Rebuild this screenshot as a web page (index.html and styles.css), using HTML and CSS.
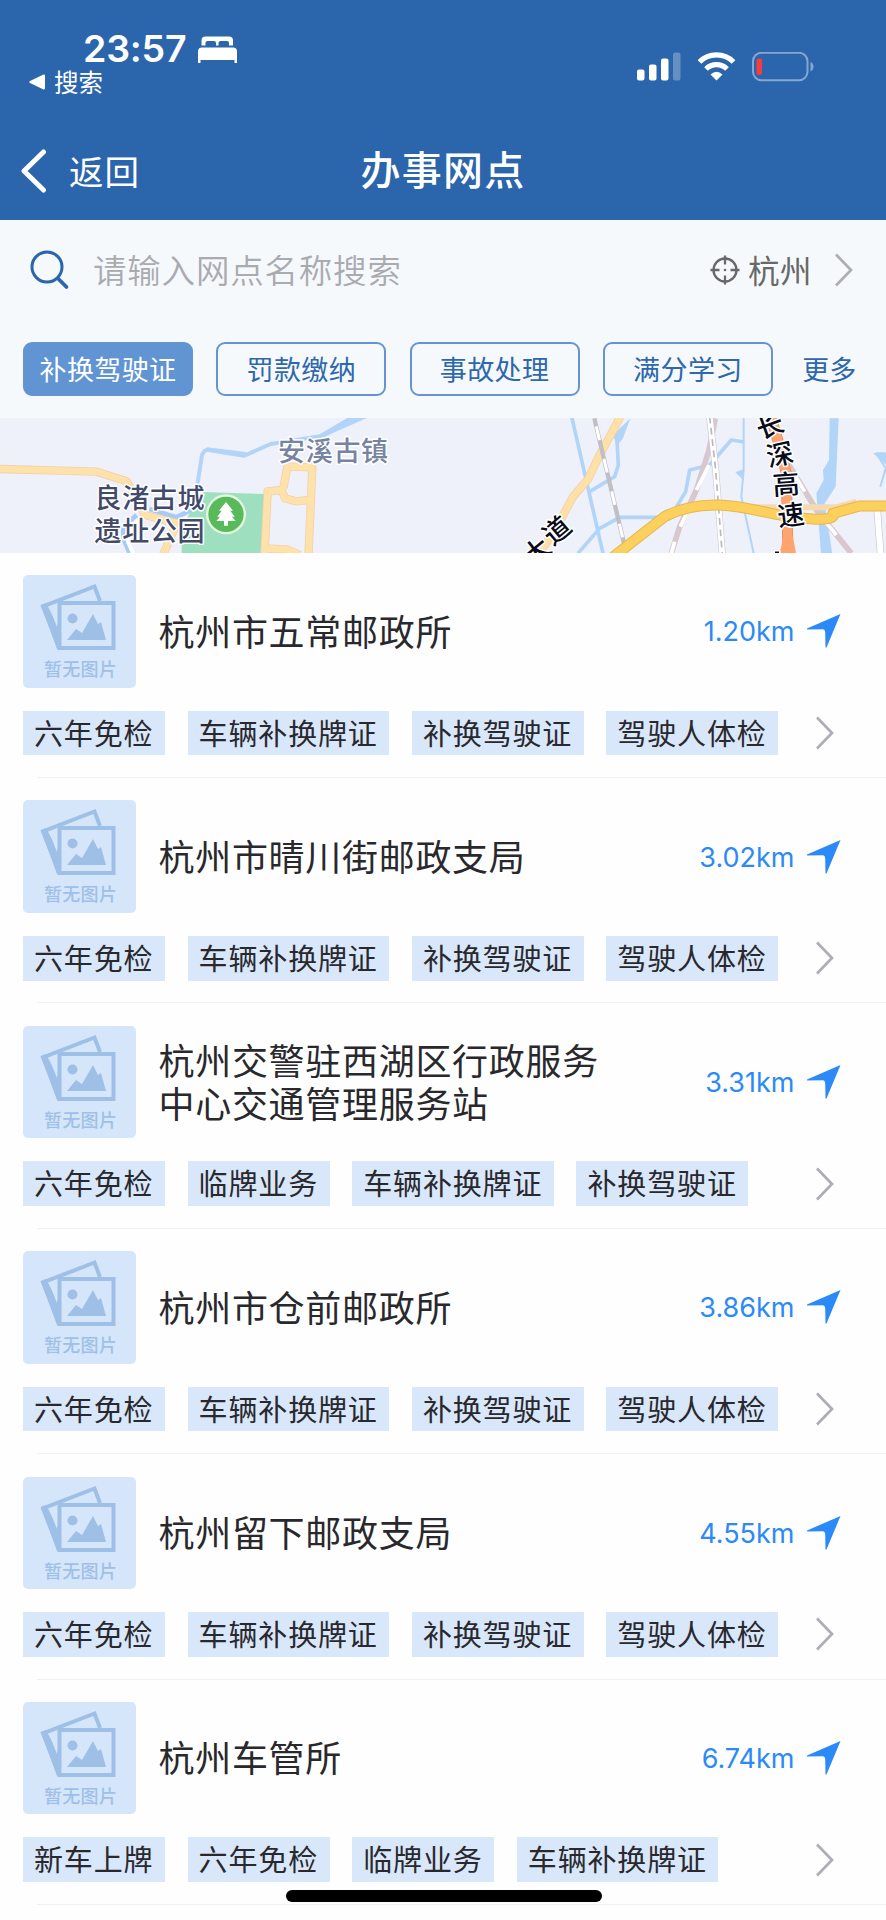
FILE: index.html
```html
<!DOCTYPE html>
<html lang="zh-CN">
<head>
<meta charset="utf-8">
<title>办事网点</title>
<link rel="stylesheet" href="styles.css">
</head>
<body>
<svg class="defs" width="0" height="0">
  <symbol id="photos" viewBox="0 0 78 68">
    <path fill="none" stroke="#9fc0e6" stroke-width="4" d="M60 18 54.500 3.500 3 23.500 19 64"/>
    <path fill="#9fc0e6" d="M1 22 6 20 21 48V66H17z"/>
    <path fill="#d5e6fb" d="M9.500 25 17 22V44z"/>
    <rect x="19.500" y="20" width="54" height="45" fill="#d5e6fb" stroke="#9fc0e6" stroke-width="4"/>
    <circle cx="32.500" cy="35.500" r="5" fill="#9fc0e6"/>
    <path fill="#9fc0e6" d="M27 57 36 46 42 50 53 31 58 41 61 39 66 57z"/>
  </symbol>
  <symbol id="arrow" viewBox="0 0 34 34"><path fill="#2b8af7" d="M33.500 0 0 14.500V15.500L16 15.300Q18 15.300 18.200 18L18.500 33.500H19.500z"/></symbol>
  <symbol id="chev" viewBox="0 0 20 36"><path fill="none" stroke="#adadb5" stroke-width="2.700" d="M2 2.500 17 18 2 33.500"/></symbol>
</svg>
<div class="screen">
<header class="top">
  <div class="status">
    <div class="status-left">
      <div class="time">23:57
        <svg class="bed" width="39" height="27" viewBox="0 0 39 27"><path fill="#fff" d="M3.500 9.500V4.500Q3.500.500 7.500.500H31Q35 .500 35 4.500V9.500H31V7Q31 5 29 5H22.500Q20.500 5 20.500 7V9.500H18V7Q18 5 16 5H9.500Q7.500 5 7.500 7V9.500zM0 27V15.500Q0 11.500 4 11.500H35Q39 11.500 39 15.500V27H36.500V24H2.500V27z"/></svg>
      </div>
      <div class="backapp"><svg width="16" height="16" viewBox="0 0 16 16"><path fill="#fff" d="M14 .800Q16 0 16 2V14Q16 16 14 15.200L1 9Q-.500 8 1 7z"/></svg>搜索</div>
    </div>
    <div class="status-right">
      <svg width="178" height="30" viewBox="0 0 178 30">
        <g fill="#fff"><rect x="0" y="17.500" width="7.500" height="11" rx="2"/><rect x="12" y="12.500" width="7.500" height="16" rx="2"/><rect x="24" y="6.500" width="7.500" height="22" rx="2"/><rect x="36" y=".500" width="7.500" height="28" rx="2" opacity=".28"/></g>
        <g fill="none" stroke="#fff" stroke-width="5.200"><path d="M62.500 10A24 24 0 0 1 96.500 10"/><path d="M69 17A15 15 0 0 1 90 17"/></g>
        <path fill="#fff" d="M73.500 22.500Q79.500 17 85.500 22.500L79.500 28.500z"/>
        <rect x="116" y=".800" width="54.500" height="27.500" rx="8.500" fill="none" stroke="#84a7d2" stroke-width="2"/>
        <path d="M173.500 10Q176.500 11 176.500 14.500T173.500 19.500z" fill="#84a7d2"/>
        <rect x="119.500" y="6.500" width="5.500" height="16.500" rx="2" fill="#f83c3b"/>
      </svg>
    </div>
  </div>
  <nav class="nav">
    <div class="back"><svg width="26" height="44" viewBox="0 0 26 44"><path fill="none" stroke="#fff" stroke-width="5" stroke-linecap="round" stroke-linejoin="round" d="M22.500 3 3 22 22.500 41"/></svg><span>返回</span></div>
    <h1 class="title">办事网点</h1>
  </nav>
</header>
<section class="filter">
  <div class="search">
    <svg class="glass" width="40" height="40" viewBox="0 0 40 40"><circle cx="17" cy="17" r="15" fill="none" stroke="#2b65ab" stroke-width="3"/><path stroke="#2b65ab" stroke-width="3.800" stroke-linecap="round" d="M28 28.500 36.500 37"/></svg>
    <span class="placeholder">请输入网点名称搜索</span>
    <span class="city"><svg width="30" height="30" viewBox="0 0 30 30"><g fill="none" stroke="#686868" stroke-width="2.300"><circle cx="15" cy="15" r="11.500"/><path d="M15 .500V9.500M15 20.500V29.500M.500 15H9.500M20.500 15H29.500"/></g><circle cx="15" cy="15" r="1.300" fill="#686868"/></svg><span>杭州</span></span>
    <svg class="city-chev" width="20" height="36"><use href="#chev"/></svg>
  </div>
  <div class="chips"><span class="chip active">补换驾驶证</span><span class="chip">罚款缴纳</span><span class="chip">事故处理</span><span class="chip">满分学习</span><span class="more">更多</span></div>
</section>
<svg class="map" width="886" height="135" viewBox="0 0 886 135">
  <rect width="886" height="135" fill="#eff1fa"/>
  <g transform="translate(0 -8) scale(.33333)" fill="none" stroke-linejoin="round">
    <path d="M592 225 606 135Q614 115 630 120L738 135 812 102 965 78 1080 20" stroke="#b1d4f9" stroke-width="12"/>
    <path d="M620 112 738 126 735 144 625 126zM960 72 1045 22H1105L965 84z" fill="#b1d4f9"/>
    <path fill="#9edfc0" d="M545 445V350L608 246 795 252 783 445z"/>
    <path d="M448 297 528 322 575 300M395 445 370 385V350L410 315" stroke="#a6cbf4" stroke-width="14"/>
    <path d="M405 445 380 385 385 350 440 320" stroke="#fff" stroke-width="12"/>
    <g stroke="#f3cfae" stroke-width="25"><path d="M0 177 290 185 380 214 435 315 530 340 485 445M850 235 862 170 937 172 925 445M793 445 803 244 845 240 855 265 888 274 940 268M790 415 860 418 900 435"/></g>
    <g stroke="#ffe2a9" stroke-width="20"><path d="M0 177 290 185 380 214 435 315 530 340 485 445M850 235 862 170 937 172 925 445M793 445 803 244 845 240 855 265 888 274 940 268M790 415 860 418 900 435"/></g>
    <circle cx="678" cy="313" r="60" fill="#e4f7df"/><circle cx="678" cy="313" r="53" fill="#58ba5b"/>
    <path fill="#fff" d="M678 276 699 302H691L704 320H696L707 333H684V347H672V333H649L660 320H652L665 302H657z"/>
  </g>
  <g transform="translate(443 -8) scale(.33333)" fill="none" stroke-linejoin="round">
    <g stroke="#b1d4f9" stroke-width="11"><path d="M386 20 480 430M405 430 470 355 530 322H650M440 245 515 200 526 165 522 90M695 300 728 245 740 180 800 165 865 90 903 96"/><path stroke-width="6" d="M902 25V180L895 260 932 430M1328 130H1300L1328 175 1312 230"/></g>
    <path fill="#b1d4f9" d="M562 25 540 85 522 108 510 75zM1160 25H1187L1178 230 1145 280 1170 445H1135L1120 250 1142 210 1140 180 1158 150zM877 187 901 178V210zM1290 130H1330V165z"/>
    <path d="M532 20 465 145 435 208 390 260 350 335 290 430" stroke="#f3cfae" stroke-width="25"/><path d="M532 20 465 145 435 208 390 260 350 335 290 430" stroke="#ffe0a5" stroke-width="20"/>
    <path d="M454 25 543 400" stroke="#bfbfc5" stroke-width="13"/><path d="M454 25 543 400" stroke="#fff" stroke-width="9" stroke-dasharray="42 58" stroke-dashoffset="-25"/>
    <path d="M817 25 798 120 760 240 710 350 685 430M1035 160 1120 300 1225 430" stroke="#d9c7ce" stroke-width="17"/>
    <path d="M798 165 760 240M736 300 712 350M695 395 685 430M1055 195 1085 245M1135 320 1180 375" stroke="#fff" stroke-width="11"/>
    <path d="M800 20 818 180 838 435" stroke="#d1ccd4" stroke-width="21"/><path d="M800 20 818 180 838 435" stroke="#fff" stroke-width="17"/><path d="M800 20 818 180 838 435" stroke="#b8b8be" stroke-width="5" stroke-dasharray="20 14"/>
    <path d="M1302 290 1313 435" stroke="#ccc6d4" stroke-width="22"/><path d="M1302 290 1313 435" stroke="#fff" stroke-width="18"/>
    <path d="M985 25 1010 110 1030 190 1035 445" stroke="#e48d65" stroke-width="33"/><path d="M985 25 1010 110 1030 190 1035 445" stroke="#ffa46f" stroke-width="28"/><path fill="#ffa46f" d="M1020 380 1010 435H1060L1050 380z"/>
    <path d="M900 292H1180L1240 275" stroke="#f6d9ae" stroke-width="18"/>
    <path d="M505 445 665 320Q735 282 830 285 880 287 960 305T1110 327 1170 310L1250 288H1335" stroke="#e6b64f" stroke-width="33"/>
    <path d="M505 445 665 320Q735 282 830 285 880 287 960 305T1110 327 1170 310L1250 288H1335" stroke="#fcd05c" stroke-width="27"/>
  </g>
  <g class="map-label">
    <text class="town" x="278" y="42.500">安溪古镇</text>
    <text class="park" x="94.500" y="89.500">良渚古城</text>
    <text class="park" x="94.500" y="122.500">遗址公园</text>
    <g class="road" text-anchor="middle">
      <text transform="translate(770 8) rotate(-20)" y="9.500">长</text>
      <text transform="translate(780 37) rotate(-12)" y="9.500">深</text>
      <text transform="translate(786 66.500) rotate(-4)" y="9.500">高</text>
      <text transform="translate(791 97.500) rotate(-7)" y="9.500">速</text>
      <text transform="translate(557 112.500) rotate(-40)" y="9.500">道</text>
      <text transform="translate(537 134) rotate(-40)" y="9.500">大</text>
    </g>
    <path d="M775 133.500H779V136H775z" fill="#080b19"/>
  </g>
</svg>
<main class="list">
  <article class="item"><div class="info"><div class="thumb"><svg width="78" height="68"><use href="#photos"/></svg><span>暂无图片</span></div><h2 class="name">杭州市五常邮政所</h2><span class="dist">1.20km</span><svg class="go" width="34" height="34"><use href="#arrow"/></svg></div>
    <div class="tags"><span class="tag">六年免检</span><span class="tag">车辆补换牌证</span><span class="tag">补换驾驶证</span><span class="tag">驾驶人体检</span><svg class="chev" width="20" height="36"><use href="#chev"/></svg></div></article>
  <article class="item"><div class="info"><div class="thumb"><svg width="78" height="68"><use href="#photos"/></svg><span>暂无图片</span></div><h2 class="name">杭州市晴川街邮政支局</h2><span class="dist">3.02km</span><svg class="go" width="34" height="34"><use href="#arrow"/></svg></div>
    <div class="tags"><span class="tag">六年免检</span><span class="tag">车辆补换牌证</span><span class="tag">补换驾驶证</span><span class="tag">驾驶人体检</span><svg class="chev" width="20" height="36"><use href="#chev"/></svg></div></article>
  <article class="item"><div class="info"><div class="thumb"><svg width="78" height="68"><use href="#photos"/></svg><span>暂无图片</span></div><h2 class="name">杭州交警驻西湖区行政服务<br>中心交通管理服务站</h2><span class="dist">3.31km</span><svg class="go" width="34" height="34"><use href="#arrow"/></svg></div>
    <div class="tags"><span class="tag">六年免检</span><span class="tag">临牌业务</span><span class="tag">车辆补换牌证</span><span class="tag">补换驾驶证</span><svg class="chev" width="20" height="36"><use href="#chev"/></svg></div></article>
  <article class="item"><div class="info"><div class="thumb"><svg width="78" height="68"><use href="#photos"/></svg><span>暂无图片</span></div><h2 class="name">杭州市仓前邮政所</h2><span class="dist">3.86km</span><svg class="go" width="34" height="34"><use href="#arrow"/></svg></div>
    <div class="tags"><span class="tag">六年免检</span><span class="tag">车辆补换牌证</span><span class="tag">补换驾驶证</span><span class="tag">驾驶人体检</span><svg class="chev" width="20" height="36"><use href="#chev"/></svg></div></article>
  <article class="item"><div class="info"><div class="thumb"><svg width="78" height="68"><use href="#photos"/></svg><span>暂无图片</span></div><h2 class="name">杭州留下邮政支局</h2><span class="dist">4.55km</span><svg class="go" width="34" height="34"><use href="#arrow"/></svg></div>
    <div class="tags"><span class="tag">六年免检</span><span class="tag">车辆补换牌证</span><span class="tag">补换驾驶证</span><span class="tag">驾驶人体检</span><svg class="chev" width="20" height="36"><use href="#chev"/></svg></div></article>
  <article class="item"><div class="info"><div class="thumb"><svg width="78" height="68"><use href="#photos"/></svg><span>暂无图片</span></div><h2 class="name">杭州车管所</h2><span class="dist">6.74km</span><svg class="go" width="34" height="34"><use href="#arrow"/></svg></div>
    <div class="tags"><span class="tag">新车上牌</span><span class="tag">六年免检</span><span class="tag">临牌业务</span><span class="tag">车辆补换牌证</span><svg class="chev" width="20" height="36"><use href="#chev"/></svg></div></article>
</main>
<div class="home-bar"></div>
</div>
</body>
</html>
```
FILE: styles.css
```css
* { box-sizing: border-box; margin: 0; padding: 0; }
body { background: #fefefe; font-family: "Noto Sans CJK SC", sans-serif; color: #29292d; }
svg { display: block; flex: none; }
.defs { position: absolute; }
.screen { position: relative; width: 886px; height: 1920px; overflow: hidden; }
.top { height: 220px; background: #2b65ab; color: #fff; }
.status { height: 122px; display: flex; justify-content: space-between; }
.status-left { padding: 34px 0 0 29px; }
.time { display: flex; align-items: center; height: 30px; padding-left: 54px; font: 600 37.5px/30px Inter, sans-serif; letter-spacing: -.2px; }
.bed { margin-left: 12px; }
.backapp { display: flex; align-items: center; gap: 9px; height: 24px; margin-top: 6px; font-size: 24.5px; line-height: 24px; }
.status-right { padding: 51.5px 71.5px 0 0; }
.nav { display: grid; grid-template-columns: 1fr auto 1fr; align-items: center; height: 98px; }
.back { display: flex; align-items: center; gap: 22px; padding-left: 21px; font-size: 34.5px; line-height: 44px; letter-spacing: 1px; }
.back span { margin-top: -3px; }
.title { font-size: 40px; font-weight: 500; line-height: 48px; letter-spacing: 1.3px; margin-top: -6px; }
.filter { height: 198px; background: #f5f9fc; }
.search { display: flex; align-items: center; height: 100px; padding: 0 32px 0 30px; }
.placeholder { margin: -3px 0 0 23px; flex: 1; font-size: 33.5px; line-height: 40px; letter-spacing: .8px; color: #aaaaaf; font-weight: 350; }
.city { display: flex; align-items: center; gap: 8px; font-size: 31.5px; line-height: 40px; letter-spacing: .5px; color: #686868; }
.city span { margin-top: -3px; }
.city-chev { margin-left: 22px; }
.chips { display: flex; gap: 23.3px; padding: 22px 0 0 23px; }
.chip { width: 170px; height: 54px; border: 2px solid #6495d0; border-radius: 9px; text-align: center; font-size: 27px; line-height: 49px; letter-spacing: .4px; color: #2f67ad; }
.chip.active { background: #6194d3; color: #fff; }
.more { margin-left: 6px; font-size: 27px; line-height: 53px; color: #2f67ad; }
.map { overflow: hidden; }
.map-label { font-family: "Noto Sans CJK SC", sans-serif; paint-order: stroke; stroke: #fff; stroke-width: 3px; stroke-linejoin: round; }
.town { font-size: 27px; letter-spacing: .7px; fill: #7783a2; font-weight: 500; }
.park { font-size: 27px; letter-spacing: .7px; fill: #414a6a; font-weight: 500; }
.road { font-size: 27px; fill: #080b19; font-weight: 500; }
.item { height: 225.4px; padding: 22px 0 0 23px; background: linear-gradient(#f0f0f2, #f0f0f2) 37px 100% / 100% 1.4px no-repeat; }
.info { display: flex; align-items: center; height: 112.5px; }
.thumb { width: 112.5px; height: 112.5px; padding: 8px 0 0 16.5px; border-radius: 5px; background: #d5e6fb; color: #9fc0e6; font-size: 18px; line-height: 24px; }
.thumb span { display: block; margin: 5px 0 0 4.5px; letter-spacing: .3px; font-weight: 500; }
.name { flex: 1; margin: -2px 0 0 23px; font-weight: 400; font-size: 36px; line-height: 43.5px; letter-spacing: .7px; }
.dist { margin-top: 2px; font: 400 27px/40px Inter, sans-serif; color: #2b8af7; }
.go { margin: 0 45px 0 12.5px; }
.tags { display: flex; align-items: center; gap: 22.7px; margin-top: 23px; height: 44.7px; padding-right: 51.5px; }
.tag { height: 44.7px; padding: 0 11.5px 0 11px; background: #d9e7fb; font-size: 29px; line-height: 43px; letter-spacing: .85px; white-space: nowrap; }
.chev { margin-left: auto; }
.home-bar { position: absolute; left: 285.5px; top: 1890px; width: 316px; height: 11.5px; border-radius: 6px; background: #000; }
```
